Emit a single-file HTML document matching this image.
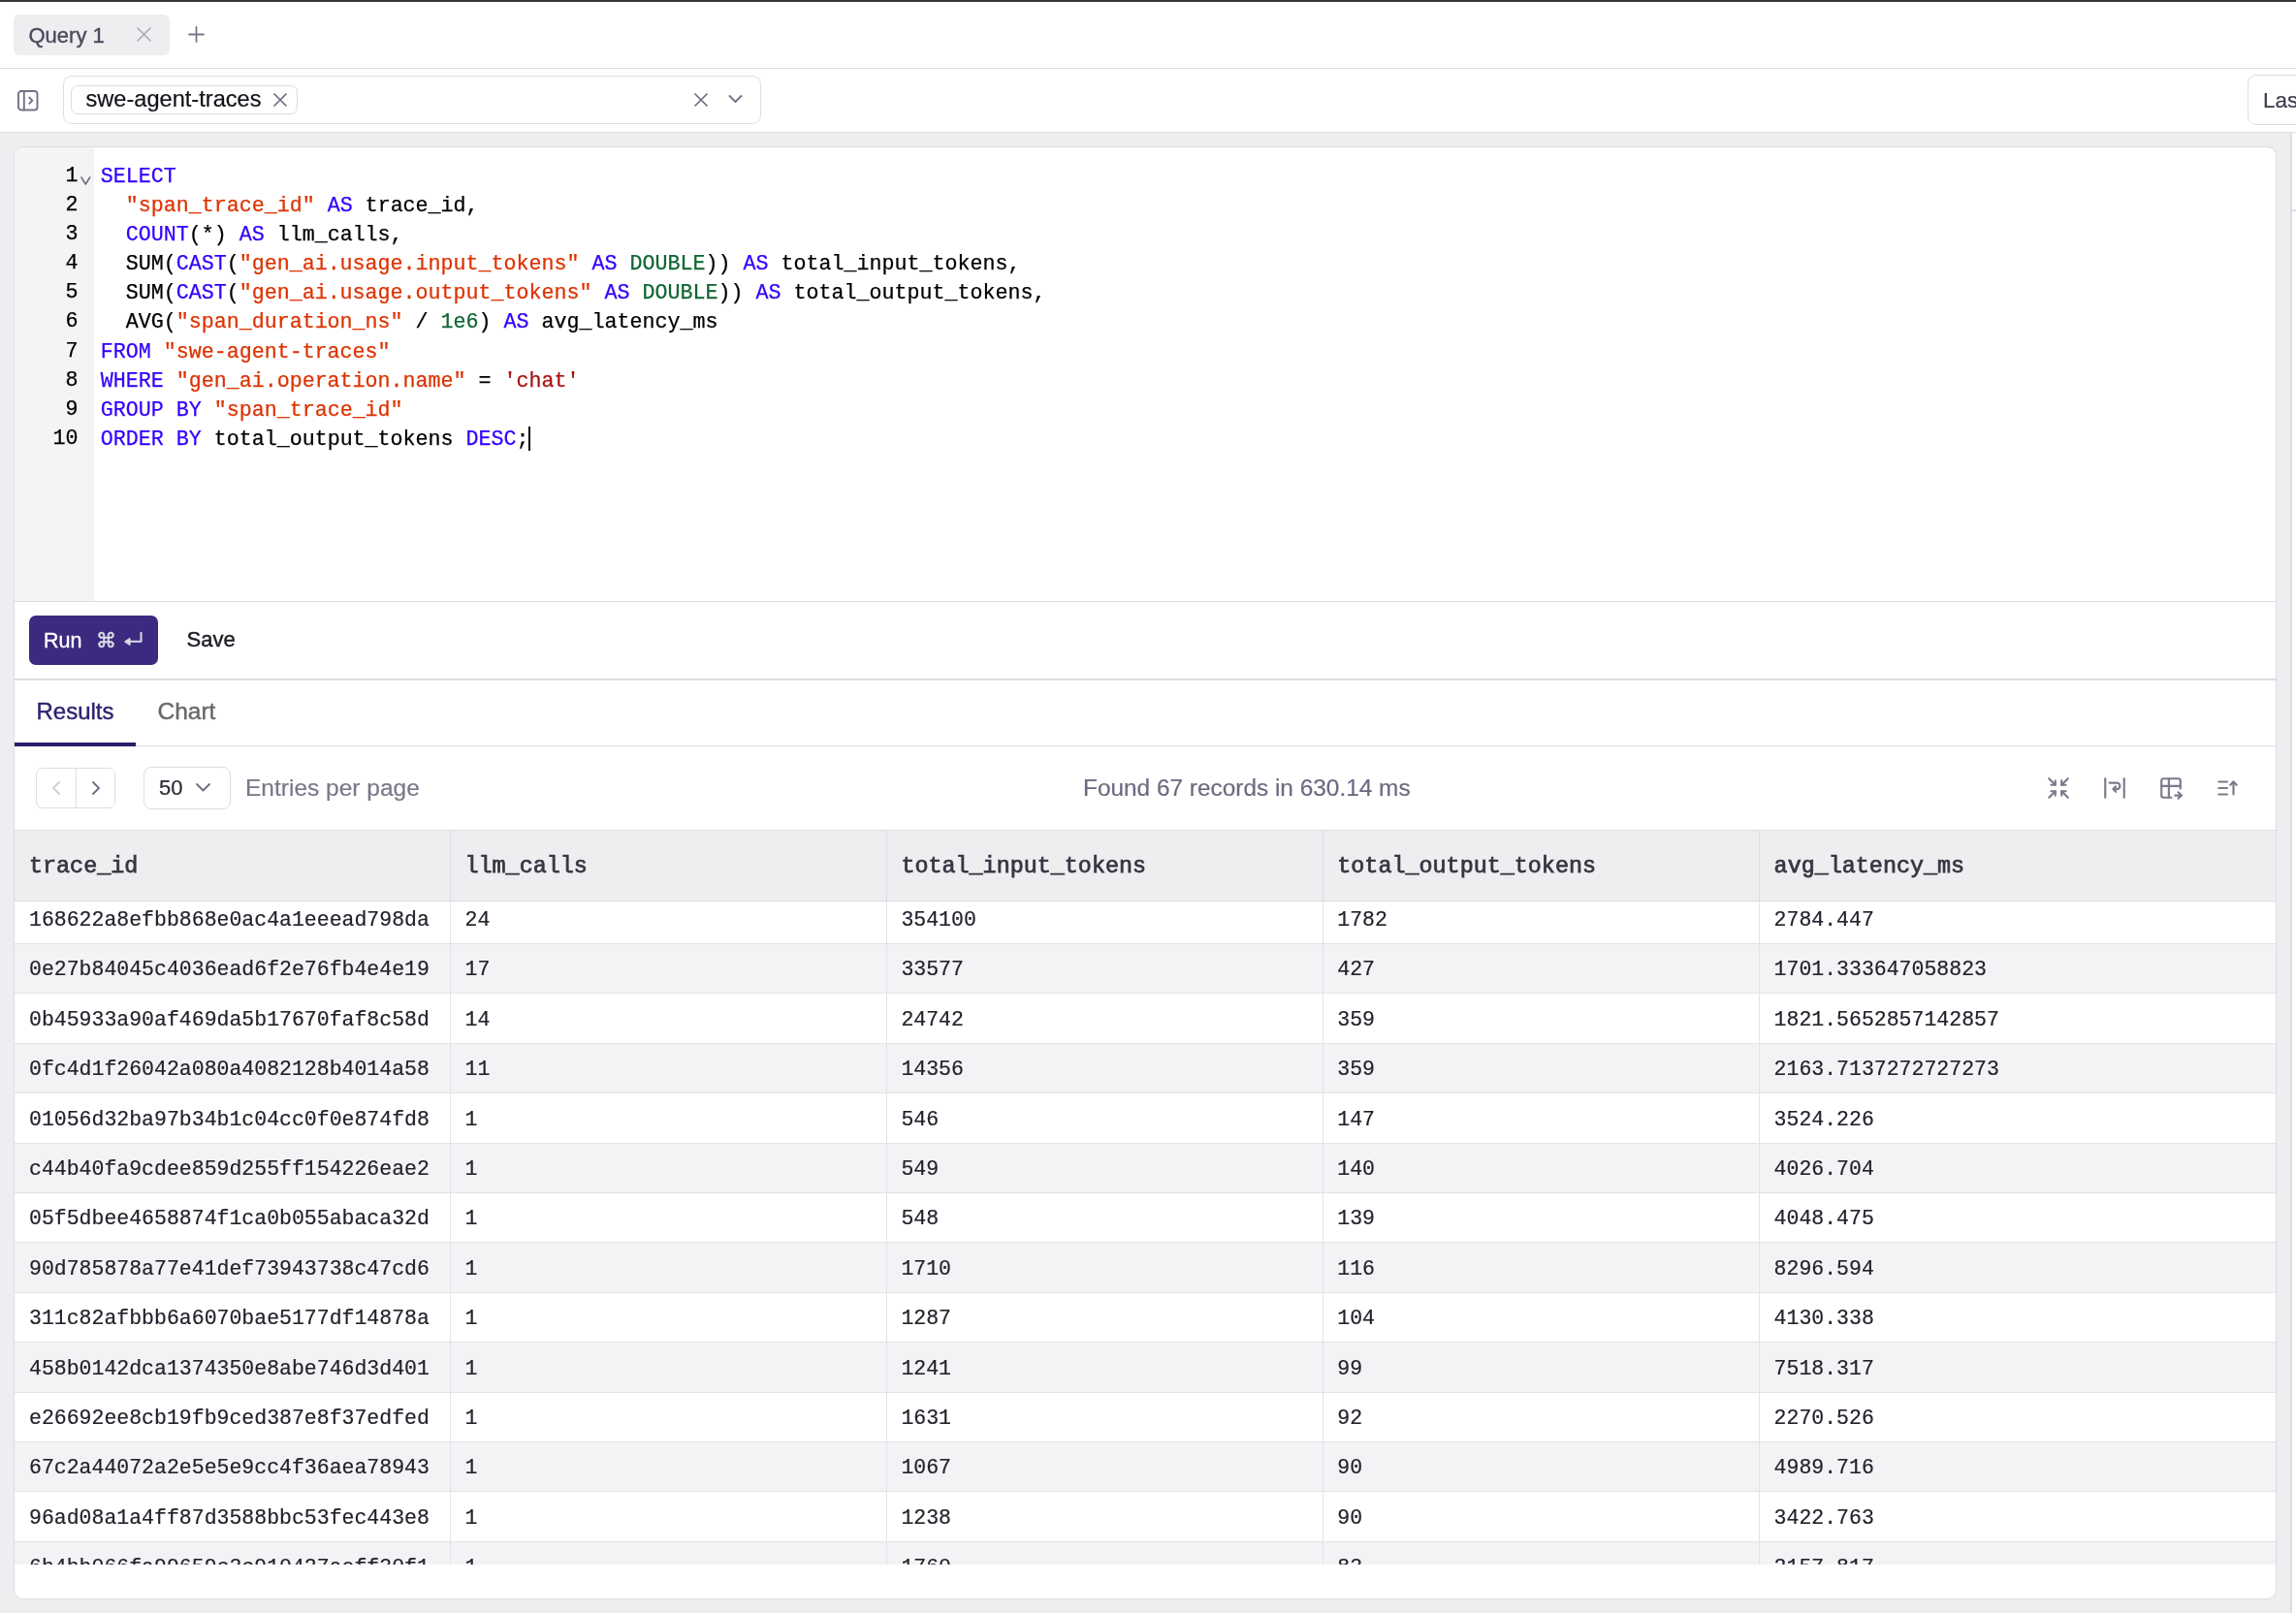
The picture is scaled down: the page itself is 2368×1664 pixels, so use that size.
<!DOCTYPE html>
<html><head><meta charset="utf-8"><style>
html,body{margin:0;padding:0;width:2368px;height:1664px;overflow:hidden;background:#fff;position:relative}
.t{position:absolute;white-space:pre}
#root{position:absolute;left:0;top:0;width:2368px;height:1664px;will-change:transform}
.r{position:absolute}
</style></head><body><div id="root">
<div class="r" style="left:0px;top:0px;width:2368px;height:2px;background:#363736"></div>
<div class="r" style="left:0px;top:70px;width:2368px;height:1px;background:#dcdde3"></div>
<div class="r" style="left:14px;top:15px;width:161px;height:42px;background:#edeef0;border-radius:6px"></div>
<div class="t" style="left:29.50px;top:24.68px;font-family:'Liberation Sans', sans-serif;font-size:22px;line-height:24.58px;color:#4b4b5c;font-weight:400;-webkit-text-stroke:0.4px currentColor">Query 1</div>
<svg class="r" style="left:141px;top:28px" width="15" height="15" viewBox="0 0 15 15" fill="none" stroke="#a9a9b5" stroke-width="1.6" stroke-linecap="round" stroke-linejoin="round"><path d="M1 1L14 14M14 1L1 14"/></svg>
<svg class="r" style="left:194px;top:27px" width="17" height="17" viewBox="0 0 17 17" fill="none" stroke="#77778a" stroke-width="1.8" stroke-linecap="round" stroke-linejoin="round"><path d="M8.5 1V16M1 8.5H16"/></svg>
<div class="r" style="left:0px;top:136px;width:2368px;height:1px;background:#dcdde3"></div>
<svg class="r" style="left:17.5px;top:92.5px" width="22" height="22" viewBox="0 0 22 22" fill="none" stroke="#727286" stroke-width="1.9" stroke-linecap="round" stroke-linejoin="round"><rect x="1" y="1" width="19.5" height="19.5" rx="3"/><path d="M6.8 1V20.5M12.3 7.6L15.3 10.75L12.3 13.9"/></svg>
<div class="r" style="left:65px;top:78px;width:720px;height:50px;border:1px solid #dcdde3;border-radius:9px;box-sizing:border-box;background:#fff"></div>
<div class="r" style="left:73px;top:88px;width:234px;height:30px;border:1px solid #dcdde3;border-radius:7px;box-sizing:border-box;background:#fff"></div>
<div class="t" style="left:88.50px;top:89.43px;font-family:'Liberation Sans', sans-serif;font-size:23.6px;line-height:26.37px;color:#111118;font-weight:400;-webkit-text-stroke:0.2px currentColor">swe-agent-traces</div>
<svg class="r" style="left:282px;top:96px" width="14" height="14" viewBox="0 0 14 14" fill="none" stroke="#6e6e80" stroke-width="1.7" stroke-linecap="round" stroke-linejoin="round"><path d="M1 1L13 13M13 1L1 13"/></svg>
<svg class="r" style="left:716px;top:96px" width="14" height="14" viewBox="0 0 14 14" fill="none" stroke="#6e6e80" stroke-width="1.7" stroke-linecap="round" stroke-linejoin="round"><path d="M1 1L13 13M13 1L1 13"/></svg>
<svg class="r" style="left:751px;top:97px" width="15" height="10" viewBox="0 0 15 10" fill="none" stroke="#6e6e80" stroke-width="1.8" stroke-linecap="round" stroke-linejoin="round"><path d="M1.5 2L7.5 8L13.5 2"/></svg>
<div class="r" style="left:2318px;top:77px;width:200px;height:52px;border:1px solid #dcdde3;border-radius:9px;box-sizing:border-box;background:#fff"></div>
<div class="t" style="left:2334.00px;top:91.23px;font-family:'Liberation Sans', sans-serif;font-size:22.5px;line-height:25.14px;color:#3e3e4e;font-weight:400;-webkit-text-stroke:0.2px currentColor">Last 7 days</div>
<div class="r" style="left:0px;top:137px;width:2362px;height:1527px;background:#edeef0"></div>
<div class="r" style="left:2362px;top:137px;width:2px;height:1527px;background:#dcdde2"></div>
<div class="r" style="left:2364px;top:216px;width:4px;height:2px;background:#dcdde2"></div>
<div class="r" style="left:14px;top:151px;width:2334px;height:1499px;background:#fff;border:1px solid #dcdde3;border-radius:10px;box-sizing:border-box;overflow:hidden"></div>
<div class="r" style="left:15px;top:152px;width:82px;height:468px;background:#f4f4f5;border-top-left-radius:9px"></div>
<div class="r" style="left:15px;top:620px;width:2332px;height:1px;background:#dcdde3"></div>
<div class="t" style="left:103.70px;top:170.56px;font-family:'Liberation Mono', monospace;font-size:21.67px;line-height:24.55px;color:#000;font-weight:400;-webkit-text-stroke:0.25px currentColor"><span style="color:#3300ff">SELECT</span></div>
<div class="t" style="left:67.50px;top:169.56px;font-family:'Liberation Mono', monospace;font-size:21.67px;line-height:24.55px;color:#000;font-weight:400;-webkit-text-stroke:0.25px currentColor">1</div>
<div class="t" style="left:103.70px;top:200.74px;font-family:'Liberation Mono', monospace;font-size:21.67px;line-height:24.55px;color:#000;font-weight:400;-webkit-text-stroke:0.25px currentColor">  <span style="color:#dd3300">"span_trace_id"</span> <span style="color:#3300ff">AS</span> trace_id,</div>
<div class="t" style="left:67.50px;top:199.74px;font-family:'Liberation Mono', monospace;font-size:21.67px;line-height:24.55px;color:#000;font-weight:400;-webkit-text-stroke:0.25px currentColor">2</div>
<div class="t" style="left:103.70px;top:230.92px;font-family:'Liberation Mono', monospace;font-size:21.67px;line-height:24.55px;color:#000;font-weight:400;-webkit-text-stroke:0.25px currentColor">  <span style="color:#3300ff">COUNT</span>(*) <span style="color:#3300ff">AS</span> llm_calls,</div>
<div class="t" style="left:67.50px;top:229.92px;font-family:'Liberation Mono', monospace;font-size:21.67px;line-height:24.55px;color:#000;font-weight:400;-webkit-text-stroke:0.25px currentColor">3</div>
<div class="t" style="left:103.70px;top:261.10px;font-family:'Liberation Mono', monospace;font-size:21.67px;line-height:24.55px;color:#000;font-weight:400;-webkit-text-stroke:0.25px currentColor">  SUM(<span style="color:#3300ff">CAST</span>(<span style="color:#dd3300">"gen_ai.usage.input_tokens"</span> <span style="color:#3300ff">AS</span> <span style="color:#116633">DOUBLE</span>)) <span style="color:#3300ff">AS</span> total_input_tokens,</div>
<div class="t" style="left:67.50px;top:260.10px;font-family:'Liberation Mono', monospace;font-size:21.67px;line-height:24.55px;color:#000;font-weight:400;-webkit-text-stroke:0.25px currentColor">4</div>
<div class="t" style="left:103.70px;top:291.28px;font-family:'Liberation Mono', monospace;font-size:21.67px;line-height:24.55px;color:#000;font-weight:400;-webkit-text-stroke:0.25px currentColor">  SUM(<span style="color:#3300ff">CAST</span>(<span style="color:#dd3300">"gen_ai.usage.output_tokens"</span> <span style="color:#3300ff">AS</span> <span style="color:#116633">DOUBLE</span>)) <span style="color:#3300ff">AS</span> total_output_tokens,</div>
<div class="t" style="left:67.50px;top:290.28px;font-family:'Liberation Mono', monospace;font-size:21.67px;line-height:24.55px;color:#000;font-weight:400;-webkit-text-stroke:0.25px currentColor">5</div>
<div class="t" style="left:103.70px;top:321.46px;font-family:'Liberation Mono', monospace;font-size:21.67px;line-height:24.55px;color:#000;font-weight:400;-webkit-text-stroke:0.25px currentColor">  AVG(<span style="color:#dd3300">"span_duration_ns"</span> / <span style="color:#116633">1e6</span>) <span style="color:#3300ff">AS</span> avg_latency_ms</div>
<div class="t" style="left:67.50px;top:320.46px;font-family:'Liberation Mono', monospace;font-size:21.67px;line-height:24.55px;color:#000;font-weight:400;-webkit-text-stroke:0.25px currentColor">6</div>
<div class="t" style="left:103.70px;top:351.64px;font-family:'Liberation Mono', monospace;font-size:21.67px;line-height:24.55px;color:#000;font-weight:400;-webkit-text-stroke:0.25px currentColor"><span style="color:#3300ff">FROM</span> <span style="color:#dd3300">"swe-agent-traces"</span></div>
<div class="t" style="left:67.50px;top:350.64px;font-family:'Liberation Mono', monospace;font-size:21.67px;line-height:24.55px;color:#000;font-weight:400;-webkit-text-stroke:0.25px currentColor">7</div>
<div class="t" style="left:103.70px;top:381.82px;font-family:'Liberation Mono', monospace;font-size:21.67px;line-height:24.55px;color:#000;font-weight:400;-webkit-text-stroke:0.25px currentColor"><span style="color:#3300ff">WHERE</span> <span style="color:#dd3300">"gen_ai.operation.name"</span> = <span style="color:#aa1111">'chat'</span></div>
<div class="t" style="left:67.50px;top:380.82px;font-family:'Liberation Mono', monospace;font-size:21.67px;line-height:24.55px;color:#000;font-weight:400;-webkit-text-stroke:0.25px currentColor">8</div>
<div class="t" style="left:103.70px;top:412.00px;font-family:'Liberation Mono', monospace;font-size:21.67px;line-height:24.55px;color:#000;font-weight:400;-webkit-text-stroke:0.25px currentColor"><span style="color:#3300ff">GROUP</span> <span style="color:#3300ff">BY</span> <span style="color:#dd3300">"span_trace_id"</span></div>
<div class="t" style="left:67.50px;top:411.00px;font-family:'Liberation Mono', monospace;font-size:21.67px;line-height:24.55px;color:#000;font-weight:400;-webkit-text-stroke:0.25px currentColor">9</div>
<div class="t" style="left:103.70px;top:442.18px;font-family:'Liberation Mono', monospace;font-size:21.67px;line-height:24.55px;color:#000;font-weight:400;-webkit-text-stroke:0.25px currentColor"><span style="color:#3300ff">ORDER</span> <span style="color:#3300ff">BY</span> total_output_tokens <span style="color:#3300ff">DESC</span>;</div>
<div class="t" style="left:54.50px;top:441.18px;font-family:'Liberation Mono', monospace;font-size:21.67px;line-height:24.55px;color:#000;font-weight:400;-webkit-text-stroke:0.25px currentColor">10</div>
<svg class="r" style="left:83px;top:182.3px" width="11" height="9" viewBox="0 0 11 9" fill="none" stroke="#6a6a80" stroke-width="1.5" stroke-linecap="round" stroke-linejoin="round"><path d="M0.9 1L5.3 8L9.7 1"/></svg>
<div class="r" style="left:545px;top:440px;width:2px;height:25px;background:#000"></div>
<div class="r" style="left:30px;top:635px;width:133px;height:51px;background:#3b2a80;border-radius:7px"></div>
<div class="t" style="left:45.00px;top:648.94px;font-family:'Liberation Sans', sans-serif;font-size:21.5px;line-height:24.02px;color:#ffffff;font-weight:400;-webkit-text-stroke:0.4px currentColor">Run</div>
<div class="t" style="left:99.00px;top:649.39px;font-family:'Liberation Sans', sans-serif;font-size:21px;line-height:23.46px;color:#dcdce6;font-weight:400;-webkit-text-stroke:0.5px currentColor">&#8984;</div>
<svg class="r" style="left:127px;top:651px" width="21" height="17" viewBox="0 0 21 17" fill="none" stroke="#dcdce6" stroke-width="2" stroke-linecap="round" stroke-linejoin="round"><path d="M18.5 1.8V10.8H6"/><path d="M1.8 10.8L7 7.2V14.4Z" fill="#dcdce6" stroke-width="1"/></svg>
<div class="t" style="left:192.50px;top:648.48px;font-family:'Liberation Sans', sans-serif;font-size:22px;line-height:24.58px;color:#1a1a22;font-weight:400;-webkit-text-stroke:0.4px currentColor">Save</div>
<div class="r" style="left:15px;top:700px;width:2332px;height:2px;background:#dcdde3"></div>
<div class="t" style="left:37.50px;top:720.87px;font-family:'Liberation Sans', sans-serif;font-size:24px;line-height:26.81px;color:#2e2170;font-weight:400;-webkit-text-stroke:0.4px currentColor">Results</div>
<div class="t" style="left:162.50px;top:720.42px;font-family:'Liberation Sans', sans-serif;font-size:24.5px;line-height:27.37px;color:#68686c;font-weight:400;-webkit-text-stroke:0.4px currentColor">Chart</div>
<div class="r" style="left:15px;top:769px;width:2332px;height:1px;background:#dcdde3"></div>
<div class="r" style="left:15px;top:766px;width:125px;height:4px;background:#2a1d6b"></div>
<div class="r" style="left:37px;top:792px;width:82px;height:42px;border:1px solid #dcdde3;border-radius:7px;box-sizing:border-box"></div>
<div class="r" style="left:78px;top:792px;width:1px;height:42px;background:#dcdde3"></div>
<svg class="r" style="left:52px;top:805px" width="12" height="16" viewBox="0 0 12 16" fill="none" stroke="#d0d0d8" stroke-width="1.8" stroke-linecap="round" stroke-linejoin="round"><path d="M9 2L3 8L9 14"/></svg>
<svg class="r" style="left:93px;top:805px" width="12" height="16" viewBox="0 0 12 16" fill="none" stroke="#6e6e80" stroke-width="1.8" stroke-linecap="round" stroke-linejoin="round"><path d="M3 2L9 8L3 14"/></svg>
<div class="r" style="left:148px;top:791px;width:90px;height:44px;border:1px solid #dcdde3;border-radius:8px;box-sizing:border-box"></div>
<div class="t" style="left:164.00px;top:800.88px;font-family:'Liberation Sans', sans-serif;font-size:22px;line-height:24.58px;color:#2a2a35;font-weight:400;-webkit-text-stroke:0.2px currentColor">50</div>
<svg class="r" style="left:201px;top:807px" width="17" height="11" viewBox="0 0 17 11" fill="none" stroke="#6e6e80" stroke-width="1.8" stroke-linecap="round" stroke-linejoin="round"><path d="M2 2L8.5 8.5L15 2"/></svg>
<div class="t" style="left:253.00px;top:799.02px;font-family:'Liberation Sans', sans-serif;font-size:24.5px;line-height:27.37px;color:#78788a;font-weight:400;-webkit-text-stroke:0.2px currentColor">Entries per page</div>
<div class="t" style="left:1117.00px;top:799.31px;font-family:'Liberation Sans', sans-serif;font-size:24.4px;line-height:27.26px;color:#6b6b80;font-weight:400;-webkit-text-stroke:0.2px currentColor">Found 67 records in 630.14 ms</div>
<svg class="r" style="left:2110px;top:800px" width="26" height="26" viewBox="0 0 24 24" fill="none" stroke="#7a7a8c" stroke-width="2" stroke-linecap="round" stroke-linejoin="round"><path d="M5 9l4 0l0 -4"/><path d="M3 3l6 6"/><path d="M5 15l4 0l0 4"/><path d="M3 21l6 -6"/><path d="M19 9l-4 0l0 -4"/><path d="M15 9l6 -6"/><path d="M19 15l-4 0l0 4"/><path d="M15 15l6 6"/></svg>
<svg class="r" style="left:2168px;top:800px" width="26" height="26" viewBox="0 0 24 24" fill="none" stroke="#7a7a8c" stroke-width="2" stroke-linecap="round" stroke-linejoin="round"><path d="M3 3v18"/><path d="M21 3v18"/><path d="M7 7h7a3 3 0 0 1 0 6h-3"/><path d="M13 10.5l-2.5 2.5l2.5 2.5"/></svg>
<svg class="r" style="left:2226px;top:800px" width="26" height="26" viewBox="0 0 24 24" fill="none" stroke="#7a7a8c" stroke-width="2" stroke-linecap="round" stroke-linejoin="round"><path d="M12.5 21h-7.5a2 2 0 0 1 -2 -2v-14a2 2 0 0 1 2 -2h14a2 2 0 0 1 2 2v7.5"/><path d="M3 10h18"/><path d="M10 3v18"/><path d="M16 19h6"/><path d="M19 16l3 3l-3 3"/></svg>
<svg class="r" style="left:2284px;top:800px" width="26" height="26" viewBox="0 0 24 24" fill="none" stroke="#7a7a8c" stroke-width="2" stroke-linecap="round" stroke-linejoin="round"><path d="M4 6h8"/><path d="M4 12h8"/><path d="M4 18h8"/><path d="M15 9l3 -3l3 3"/><path d="M18 6v12"/></svg>
<div class="r" style="left:15px;top:856px;width:2332px;height:758px;overflow:hidden"><div class="r" style="left:0;top:66.00px;width:2332px;height:51.40px;background:#ffffff"></div><div class="r" style="left:0;top:117.40px;width:2332px;height:51.40px;background:#f3f3f5"></div><div class="r" style="left:0;top:168.80px;width:2332px;height:51.40px;background:#ffffff"></div><div class="r" style="left:0;top:220.20px;width:2332px;height:51.40px;background:#f3f3f5"></div><div class="r" style="left:0;top:271.60px;width:2332px;height:51.40px;background:#ffffff"></div><div class="r" style="left:0;top:323.00px;width:2332px;height:51.40px;background:#f3f3f5"></div><div class="r" style="left:0;top:374.40px;width:2332px;height:51.40px;background:#ffffff"></div><div class="r" style="left:0;top:425.80px;width:2332px;height:51.40px;background:#f3f3f5"></div><div class="r" style="left:0;top:477.20px;width:2332px;height:51.40px;background:#ffffff"></div><div class="r" style="left:0;top:528.60px;width:2332px;height:51.40px;background:#f3f3f5"></div><div class="r" style="left:0;top:580.00px;width:2332px;height:51.40px;background:#ffffff"></div><div class="r" style="left:0;top:631.40px;width:2332px;height:51.40px;background:#f3f3f5"></div><div class="r" style="left:0;top:682.80px;width:2332px;height:51.40px;background:#ffffff"></div><div class="r" style="left:0;top:734.20px;width:2332px;height:51.40px;background:#f3f3f5"></div><div class="r" style="left:0;top:116.90px;width:2332px;height:1px;background:#e2e3e7"></div><div class="t" style="left:15.00px;top:80.90px;font-family:'Liberation Mono', monospace;font-size:21.5px;line-height:24.36px;color:#22222c;-webkit-text-stroke:0.2px currentColor">168622a8efbb868e0ac4a1eeead798da</div><div class="t" style="left:464.50px;top:80.90px;font-family:'Liberation Mono', monospace;font-size:21.5px;line-height:24.36px;color:#22222c;-webkit-text-stroke:0.2px currentColor">24</div><div class="t" style="left:914.40px;top:80.90px;font-family:'Liberation Mono', monospace;font-size:21.5px;line-height:24.36px;color:#22222c;-webkit-text-stroke:0.2px currentColor">354100</div><div class="t" style="left:1364.30px;top:80.90px;font-family:'Liberation Mono', monospace;font-size:21.5px;line-height:24.36px;color:#22222c;-webkit-text-stroke:0.2px currentColor">1782</div><div class="t" style="left:1814.60px;top:80.90px;font-family:'Liberation Mono', monospace;font-size:21.5px;line-height:24.36px;color:#22222c;-webkit-text-stroke:0.2px currentColor">2784.447</div><div class="r" style="left:0;top:168.30px;width:2332px;height:1px;background:#e2e3e7"></div><div class="t" style="left:15.00px;top:132.30px;font-family:'Liberation Mono', monospace;font-size:21.5px;line-height:24.36px;color:#22222c;-webkit-text-stroke:0.2px currentColor">0e27b84045c4036ead6f2e76fb4e4e19</div><div class="t" style="left:464.50px;top:132.30px;font-family:'Liberation Mono', monospace;font-size:21.5px;line-height:24.36px;color:#22222c;-webkit-text-stroke:0.2px currentColor">17</div><div class="t" style="left:914.40px;top:132.30px;font-family:'Liberation Mono', monospace;font-size:21.5px;line-height:24.36px;color:#22222c;-webkit-text-stroke:0.2px currentColor">33577</div><div class="t" style="left:1364.30px;top:132.30px;font-family:'Liberation Mono', monospace;font-size:21.5px;line-height:24.36px;color:#22222c;-webkit-text-stroke:0.2px currentColor">427</div><div class="t" style="left:1814.60px;top:132.30px;font-family:'Liberation Mono', monospace;font-size:21.5px;line-height:24.36px;color:#22222c;-webkit-text-stroke:0.2px currentColor">1701.333647058823</div><div class="r" style="left:0;top:219.70px;width:2332px;height:1px;background:#e2e3e7"></div><div class="t" style="left:15.00px;top:183.70px;font-family:'Liberation Mono', monospace;font-size:21.5px;line-height:24.36px;color:#22222c;-webkit-text-stroke:0.2px currentColor">0b45933a90af469da5b17670faf8c58d</div><div class="t" style="left:464.50px;top:183.70px;font-family:'Liberation Mono', monospace;font-size:21.5px;line-height:24.36px;color:#22222c;-webkit-text-stroke:0.2px currentColor">14</div><div class="t" style="left:914.40px;top:183.70px;font-family:'Liberation Mono', monospace;font-size:21.5px;line-height:24.36px;color:#22222c;-webkit-text-stroke:0.2px currentColor">24742</div><div class="t" style="left:1364.30px;top:183.70px;font-family:'Liberation Mono', monospace;font-size:21.5px;line-height:24.36px;color:#22222c;-webkit-text-stroke:0.2px currentColor">359</div><div class="t" style="left:1814.60px;top:183.70px;font-family:'Liberation Mono', monospace;font-size:21.5px;line-height:24.36px;color:#22222c;-webkit-text-stroke:0.2px currentColor">1821.5652857142857</div><div class="r" style="left:0;top:271.10px;width:2332px;height:1px;background:#e2e3e7"></div><div class="t" style="left:15.00px;top:235.10px;font-family:'Liberation Mono', monospace;font-size:21.5px;line-height:24.36px;color:#22222c;-webkit-text-stroke:0.2px currentColor">0fc4d1f26042a080a4082128b4014a58</div><div class="t" style="left:464.50px;top:235.10px;font-family:'Liberation Mono', monospace;font-size:21.5px;line-height:24.36px;color:#22222c;-webkit-text-stroke:0.2px currentColor">11</div><div class="t" style="left:914.40px;top:235.10px;font-family:'Liberation Mono', monospace;font-size:21.5px;line-height:24.36px;color:#22222c;-webkit-text-stroke:0.2px currentColor">14356</div><div class="t" style="left:1364.30px;top:235.10px;font-family:'Liberation Mono', monospace;font-size:21.5px;line-height:24.36px;color:#22222c;-webkit-text-stroke:0.2px currentColor">359</div><div class="t" style="left:1814.60px;top:235.10px;font-family:'Liberation Mono', monospace;font-size:21.5px;line-height:24.36px;color:#22222c;-webkit-text-stroke:0.2px currentColor">2163.7137272727273</div><div class="r" style="left:0;top:322.50px;width:2332px;height:1px;background:#e2e3e7"></div><div class="t" style="left:15.00px;top:286.50px;font-family:'Liberation Mono', monospace;font-size:21.5px;line-height:24.36px;color:#22222c;-webkit-text-stroke:0.2px currentColor">01056d32ba97b34b1c04cc0f0e874fd8</div><div class="t" style="left:464.50px;top:286.50px;font-family:'Liberation Mono', monospace;font-size:21.5px;line-height:24.36px;color:#22222c;-webkit-text-stroke:0.2px currentColor">1</div><div class="t" style="left:914.40px;top:286.50px;font-family:'Liberation Mono', monospace;font-size:21.5px;line-height:24.36px;color:#22222c;-webkit-text-stroke:0.2px currentColor">546</div><div class="t" style="left:1364.30px;top:286.50px;font-family:'Liberation Mono', monospace;font-size:21.5px;line-height:24.36px;color:#22222c;-webkit-text-stroke:0.2px currentColor">147</div><div class="t" style="left:1814.60px;top:286.50px;font-family:'Liberation Mono', monospace;font-size:21.5px;line-height:24.36px;color:#22222c;-webkit-text-stroke:0.2px currentColor">3524.226</div><div class="r" style="left:0;top:373.90px;width:2332px;height:1px;background:#e2e3e7"></div><div class="t" style="left:15.00px;top:337.90px;font-family:'Liberation Mono', monospace;font-size:21.5px;line-height:24.36px;color:#22222c;-webkit-text-stroke:0.2px currentColor">c44b40fa9cdee859d255ff154226eae2</div><div class="t" style="left:464.50px;top:337.90px;font-family:'Liberation Mono', monospace;font-size:21.5px;line-height:24.36px;color:#22222c;-webkit-text-stroke:0.2px currentColor">1</div><div class="t" style="left:914.40px;top:337.90px;font-family:'Liberation Mono', monospace;font-size:21.5px;line-height:24.36px;color:#22222c;-webkit-text-stroke:0.2px currentColor">549</div><div class="t" style="left:1364.30px;top:337.90px;font-family:'Liberation Mono', monospace;font-size:21.5px;line-height:24.36px;color:#22222c;-webkit-text-stroke:0.2px currentColor">140</div><div class="t" style="left:1814.60px;top:337.90px;font-family:'Liberation Mono', monospace;font-size:21.5px;line-height:24.36px;color:#22222c;-webkit-text-stroke:0.2px currentColor">4026.704</div><div class="r" style="left:0;top:425.30px;width:2332px;height:1px;background:#e2e3e7"></div><div class="t" style="left:15.00px;top:389.30px;font-family:'Liberation Mono', monospace;font-size:21.5px;line-height:24.36px;color:#22222c;-webkit-text-stroke:0.2px currentColor">05f5dbee4658874f1ca0b055abaca32d</div><div class="t" style="left:464.50px;top:389.30px;font-family:'Liberation Mono', monospace;font-size:21.5px;line-height:24.36px;color:#22222c;-webkit-text-stroke:0.2px currentColor">1</div><div class="t" style="left:914.40px;top:389.30px;font-family:'Liberation Mono', monospace;font-size:21.5px;line-height:24.36px;color:#22222c;-webkit-text-stroke:0.2px currentColor">548</div><div class="t" style="left:1364.30px;top:389.30px;font-family:'Liberation Mono', monospace;font-size:21.5px;line-height:24.36px;color:#22222c;-webkit-text-stroke:0.2px currentColor">139</div><div class="t" style="left:1814.60px;top:389.30px;font-family:'Liberation Mono', monospace;font-size:21.5px;line-height:24.36px;color:#22222c;-webkit-text-stroke:0.2px currentColor">4048.475</div><div class="r" style="left:0;top:476.70px;width:2332px;height:1px;background:#e2e3e7"></div><div class="t" style="left:15.00px;top:440.70px;font-family:'Liberation Mono', monospace;font-size:21.5px;line-height:24.36px;color:#22222c;-webkit-text-stroke:0.2px currentColor">90d785878a77e41def73943738c47cd6</div><div class="t" style="left:464.50px;top:440.70px;font-family:'Liberation Mono', monospace;font-size:21.5px;line-height:24.36px;color:#22222c;-webkit-text-stroke:0.2px currentColor">1</div><div class="t" style="left:914.40px;top:440.70px;font-family:'Liberation Mono', monospace;font-size:21.5px;line-height:24.36px;color:#22222c;-webkit-text-stroke:0.2px currentColor">1710</div><div class="t" style="left:1364.30px;top:440.70px;font-family:'Liberation Mono', monospace;font-size:21.5px;line-height:24.36px;color:#22222c;-webkit-text-stroke:0.2px currentColor">116</div><div class="t" style="left:1814.60px;top:440.70px;font-family:'Liberation Mono', monospace;font-size:21.5px;line-height:24.36px;color:#22222c;-webkit-text-stroke:0.2px currentColor">8296.594</div><div class="r" style="left:0;top:528.10px;width:2332px;height:1px;background:#e2e3e7"></div><div class="t" style="left:15.00px;top:492.10px;font-family:'Liberation Mono', monospace;font-size:21.5px;line-height:24.36px;color:#22222c;-webkit-text-stroke:0.2px currentColor">311c82afbbb6a6070bae5177df14878a</div><div class="t" style="left:464.50px;top:492.10px;font-family:'Liberation Mono', monospace;font-size:21.5px;line-height:24.36px;color:#22222c;-webkit-text-stroke:0.2px currentColor">1</div><div class="t" style="left:914.40px;top:492.10px;font-family:'Liberation Mono', monospace;font-size:21.5px;line-height:24.36px;color:#22222c;-webkit-text-stroke:0.2px currentColor">1287</div><div class="t" style="left:1364.30px;top:492.10px;font-family:'Liberation Mono', monospace;font-size:21.5px;line-height:24.36px;color:#22222c;-webkit-text-stroke:0.2px currentColor">104</div><div class="t" style="left:1814.60px;top:492.10px;font-family:'Liberation Mono', monospace;font-size:21.5px;line-height:24.36px;color:#22222c;-webkit-text-stroke:0.2px currentColor">4130.338</div><div class="r" style="left:0;top:579.50px;width:2332px;height:1px;background:#e2e3e7"></div><div class="t" style="left:15.00px;top:543.50px;font-family:'Liberation Mono', monospace;font-size:21.5px;line-height:24.36px;color:#22222c;-webkit-text-stroke:0.2px currentColor">458b0142dca1374350e8abe746d3d401</div><div class="t" style="left:464.50px;top:543.50px;font-family:'Liberation Mono', monospace;font-size:21.5px;line-height:24.36px;color:#22222c;-webkit-text-stroke:0.2px currentColor">1</div><div class="t" style="left:914.40px;top:543.50px;font-family:'Liberation Mono', monospace;font-size:21.5px;line-height:24.36px;color:#22222c;-webkit-text-stroke:0.2px currentColor">1241</div><div class="t" style="left:1364.30px;top:543.50px;font-family:'Liberation Mono', monospace;font-size:21.5px;line-height:24.36px;color:#22222c;-webkit-text-stroke:0.2px currentColor">99</div><div class="t" style="left:1814.60px;top:543.50px;font-family:'Liberation Mono', monospace;font-size:21.5px;line-height:24.36px;color:#22222c;-webkit-text-stroke:0.2px currentColor">7518.317</div><div class="r" style="left:0;top:630.90px;width:2332px;height:1px;background:#e2e3e7"></div><div class="t" style="left:15.00px;top:594.90px;font-family:'Liberation Mono', monospace;font-size:21.5px;line-height:24.36px;color:#22222c;-webkit-text-stroke:0.2px currentColor">e26692ee8cb19fb9ced387e8f37edfed</div><div class="t" style="left:464.50px;top:594.90px;font-family:'Liberation Mono', monospace;font-size:21.5px;line-height:24.36px;color:#22222c;-webkit-text-stroke:0.2px currentColor">1</div><div class="t" style="left:914.40px;top:594.90px;font-family:'Liberation Mono', monospace;font-size:21.5px;line-height:24.36px;color:#22222c;-webkit-text-stroke:0.2px currentColor">1631</div><div class="t" style="left:1364.30px;top:594.90px;font-family:'Liberation Mono', monospace;font-size:21.5px;line-height:24.36px;color:#22222c;-webkit-text-stroke:0.2px currentColor">92</div><div class="t" style="left:1814.60px;top:594.90px;font-family:'Liberation Mono', monospace;font-size:21.5px;line-height:24.36px;color:#22222c;-webkit-text-stroke:0.2px currentColor">2270.526</div><div class="r" style="left:0;top:682.30px;width:2332px;height:1px;background:#e2e3e7"></div><div class="t" style="left:15.00px;top:646.30px;font-family:'Liberation Mono', monospace;font-size:21.5px;line-height:24.36px;color:#22222c;-webkit-text-stroke:0.2px currentColor">67c2a44072a2e5e5e9cc4f36aea78943</div><div class="t" style="left:464.50px;top:646.30px;font-family:'Liberation Mono', monospace;font-size:21.5px;line-height:24.36px;color:#22222c;-webkit-text-stroke:0.2px currentColor">1</div><div class="t" style="left:914.40px;top:646.30px;font-family:'Liberation Mono', monospace;font-size:21.5px;line-height:24.36px;color:#22222c;-webkit-text-stroke:0.2px currentColor">1067</div><div class="t" style="left:1364.30px;top:646.30px;font-family:'Liberation Mono', monospace;font-size:21.5px;line-height:24.36px;color:#22222c;-webkit-text-stroke:0.2px currentColor">90</div><div class="t" style="left:1814.60px;top:646.30px;font-family:'Liberation Mono', monospace;font-size:21.5px;line-height:24.36px;color:#22222c;-webkit-text-stroke:0.2px currentColor">4989.716</div><div class="r" style="left:0;top:733.70px;width:2332px;height:1px;background:#e2e3e7"></div><div class="t" style="left:15.00px;top:697.70px;font-family:'Liberation Mono', monospace;font-size:21.5px;line-height:24.36px;color:#22222c;-webkit-text-stroke:0.2px currentColor">96ad08a1a4ff87d3588bbc53fec443e8</div><div class="t" style="left:464.50px;top:697.70px;font-family:'Liberation Mono', monospace;font-size:21.5px;line-height:24.36px;color:#22222c;-webkit-text-stroke:0.2px currentColor">1</div><div class="t" style="left:914.40px;top:697.70px;font-family:'Liberation Mono', monospace;font-size:21.5px;line-height:24.36px;color:#22222c;-webkit-text-stroke:0.2px currentColor">1238</div><div class="t" style="left:1364.30px;top:697.70px;font-family:'Liberation Mono', monospace;font-size:21.5px;line-height:24.36px;color:#22222c;-webkit-text-stroke:0.2px currentColor">90</div><div class="t" style="left:1814.60px;top:697.70px;font-family:'Liberation Mono', monospace;font-size:21.5px;line-height:24.36px;color:#22222c;-webkit-text-stroke:0.2px currentColor">3422.763</div><div class="r" style="left:0;top:785.10px;width:2332px;height:1px;background:#e2e3e7"></div><div class="t" style="left:15.00px;top:749.10px;font-family:'Liberation Mono', monospace;font-size:21.5px;line-height:24.36px;color:#22222c;-webkit-text-stroke:0.2px currentColor">6b4bb066fa99659c3c910427aeff30f1</div><div class="t" style="left:464.50px;top:749.10px;font-family:'Liberation Mono', monospace;font-size:21.5px;line-height:24.36px;color:#22222c;-webkit-text-stroke:0.2px currentColor">1</div><div class="t" style="left:914.40px;top:749.10px;font-family:'Liberation Mono', monospace;font-size:21.5px;line-height:24.36px;color:#22222c;-webkit-text-stroke:0.2px currentColor">1760</div><div class="t" style="left:1364.30px;top:749.10px;font-family:'Liberation Mono', monospace;font-size:21.5px;line-height:24.36px;color:#22222c;-webkit-text-stroke:0.2px currentColor">83</div><div class="t" style="left:1814.60px;top:749.10px;font-family:'Liberation Mono', monospace;font-size:21.5px;line-height:24.36px;color:#22222c;-webkit-text-stroke:0.2px currentColor">2157.817</div><div class="r" style="left:449.00px;top:0;width:1px;height:758px;background:#e2e3e7"></div><div class="r" style="left:898.90px;top:0;width:1px;height:758px;background:#e2e3e7"></div><div class="r" style="left:1348.80px;top:0;width:1px;height:758px;background:#e2e3e7"></div><div class="r" style="left:1799.10px;top:0;width:1px;height:758px;background:#e2e3e7"></div><div class="r" style="left:0;top:0;width:2332px;height:73.50px;background:#edeef0;border-top:1px solid #dcdde3;border-bottom:1px solid #dcdde3;box-sizing:border-box"></div><div class="t" style="left:15.00px;top:24.52px;font-family:'Liberation Mono', monospace;font-size:23.4px;line-height:26.51px;color:#363642;font-weight:400;-webkit-text-stroke:0.75px currentColor">trace_id</div><div class="t" style="left:464.50px;top:24.52px;font-family:'Liberation Mono', monospace;font-size:23.4px;line-height:26.51px;color:#363642;font-weight:400;-webkit-text-stroke:0.75px currentColor">llm_calls</div><div class="r" style="left:449.00px;top:0;width:1px;height:73.50px;background:#dcdde3"></div><div class="t" style="left:914.40px;top:24.52px;font-family:'Liberation Mono', monospace;font-size:23.4px;line-height:26.51px;color:#363642;font-weight:400;-webkit-text-stroke:0.75px currentColor">total_input_tokens</div><div class="r" style="left:898.90px;top:0;width:1px;height:73.50px;background:#dcdde3"></div><div class="t" style="left:1364.30px;top:24.52px;font-family:'Liberation Mono', monospace;font-size:23.4px;line-height:26.51px;color:#363642;font-weight:400;-webkit-text-stroke:0.75px currentColor">total_output_tokens</div><div class="r" style="left:1348.80px;top:0;width:1px;height:73.50px;background:#dcdde3"></div><div class="t" style="left:1814.60px;top:24.52px;font-family:'Liberation Mono', monospace;font-size:23.4px;line-height:26.51px;color:#363642;font-weight:400;-webkit-text-stroke:0.75px currentColor">avg_latency_ms</div><div class="r" style="left:1799.10px;top:0;width:1px;height:73.50px;background:#dcdde3"></div></div>
</div></body></html>
